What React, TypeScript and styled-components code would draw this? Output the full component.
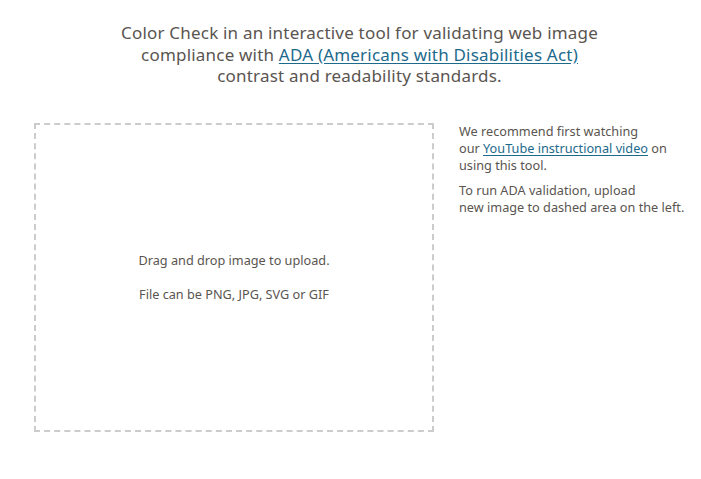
import React from "react";
import styled, { createGlobalStyle } from "styled-components";

const Global = createGlobalStyle`
  body {
    margin: 0;
    background: #ffffff;
    font-family: "Noto Sans", "Open Sans", sans-serif;
    color: #5a5550;
  }
`;

const Page = styled.div`
  width: 701px;
  padding: 22px 0 0 18px;
  box-sizing: border-box;
`;

const Intro = styled.p`
  margin: 0 auto;
  text-align: center;
  font-size: 17px;
  line-height: 21.5px;
  letter-spacing: 0.2px;
`;

const Link = styled.a`
  color: #1d6a8c;
  text-decoration: underline;
  text-underline-offset: 2px;
`;

const Main = styled.div`
  display: flex;
  gap: 25px;
  margin-top: 36px;
  margin-left: 16px;
`;

const DropZone = styled.div`
  width: 400px;
  height: 309px;
  box-sizing: border-box;
  border: 2px dashed #cccccc;
  display: flex;
  flex-direction: column;
  align-items: center;
  justify-content: center;
  gap: 17px;
  font-size: 12.7px;
  line-height: 17px;
`;

const Side = styled.div`
  font-size: 12.7px;
  line-height: 17px;
`;

const Para = styled.p`
  margin: 0 0 8px;
`;

const Line = styled.span`
  display: block;
  white-space: nowrap;
`;

export default function App() {
  return (
    <>
      <Global />
      <Page>
        <Intro>
          Color Check in an interactive tool for validating web image
          <br />
          compliance with <Link href="#">ADA (Americans with Disabilities Act)</Link>
          <br />
          contrast and readability standards.
        </Intro>
        <Main>
          <DropZone>
            <div>Drag and drop image to upload.</div>
            <div>File can be PNG, JPG, SVG or GIF</div>
          </DropZone>
          <Side>
            <Para>
              <Line>We recommend first watching</Line>
              <Line>
                our <Link href="#">YouTube instructional video</Link> on
              </Line>
              <Line>using this tool.</Line>
            </Para>
            <Para>
              <Line>To run ADA validation, upload</Line>
              <Line>new image to dashed area on the left.</Line>
            </Para>
          </Side>
        </Main>
      </Page>
    </>
  );
}
